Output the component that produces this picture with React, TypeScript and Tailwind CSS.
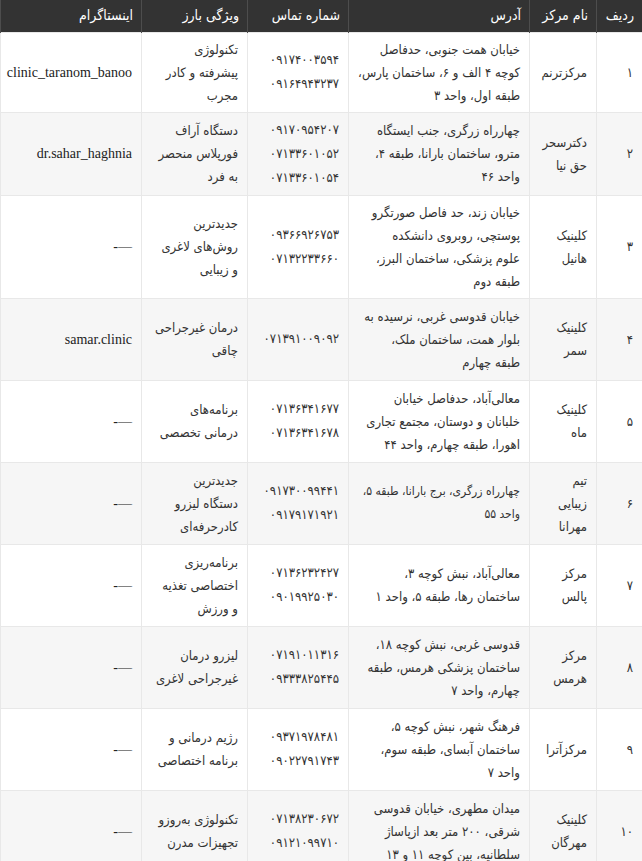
import React from "react";

type Clinic = {
  id: string;
  name: string[];
  address: string[];
  phones: string[];
  feature: string[];
  instagram: string;
  tight?: boolean;
};

const clinics: Clinic[] = [
  {
    id: "۱",
    name: ["مرکزترنم"],
    address: ["خیابان همت جنوبی، حدفاصل", "کوچه ۴ الف و ۶، ساختمان پارس،", "طبقه اول، واحد ۳"],
    phones: ["۰۹۱۷۴۰۰۳۵۹۴", "۰۹۱۶۴۹۴۳۲۳۷"],
    feature: ["تکنولوژی", "پیشرفته و کادر", "مجرب"],
    instagram: "clinic_taranom_banoo",
  },
  {
    id: "۲",
    name: ["دکترسحر", "حق نیا"],
    address: ["چهارراه زرگری، جنب ایستگاه", "مترو، ساختمان بارانا، طبقه ۴،", "واحد ۴۶"],
    phones: ["۰۹۱۷۰۹۵۴۲۰۷", "۰۷۱۳۳۶۰۱۰۵۲", "۰۷۱۳۳۶۰۱۰۵۴"],
    feature: ["دستگاه آراف", "فورپلاس منحصر", "به فرد"],
    instagram: "dr.sahar_haghnia",
  },
  {
    id: "۳",
    name: ["کلینیک", "هانیل"],
    address: ["خیابان زند، حد فاصل صورتگرو", "پوستچی، روبروی دانشکده", "علوم پزشکی، ساختمان البرز،", "طبقه دوم"],
    phones: ["۰۹۳۶۶۹۲۶۷۵۳", "۰۷۱۳۲۲۳۳۶۶۰"],
    feature: ["جدیدترین", "روش‌های لاغری", "و زیبایی"],
    instagram: "",
  },
  {
    id: "۴",
    name: ["کلینیک", "سمر"],
    address: ["خیابان قدوسی غربی، نرسیده به", "بلوار همت، ساختمان ملک،", "طبقه چهارم"],
    phones: ["۰۷۱۳۹۱۰۰۹۰۹۲"],
    feature: ["درمان غیرجراحی", "چاقی"],
    instagram: "samar.clinic",
  },
  {
    id: "۵",
    name: ["کلینیک", "ماه"],
    address: ["معالی‌آباد، حدفاصل خیابان", "خلبانان و دوستان، مجتمع تجاری", "اهورا، طبقه چهارم، واحد ۴۴"],
    phones: ["۰۷۱۳۶۳۴۱۶۷۷", "۰۷۱۳۶۳۴۱۶۷۸"],
    feature: ["برنامه‌های", "درمانی تخصصی"],
    instagram: "",
  },
  {
    id: "۶",
    name: ["تیم", "زیبایی", "مهرانا"],
    address: ["چهارراه زرگری، برج بارانا، طبقه ۵،", "واحد ۵۵"],
    phones: ["۰۹۱۷۳۰۰۹۹۴۴۱", "۰۹۱۷۹۱۷۱۹۲۱"],
    feature: ["جدیدترین", "دستگاه لیزرو", "کادرحرفه‌ای"],
    instagram: "",
    tight: true,
  },
  {
    id: "۷",
    name: ["مرکز", "پالس"],
    address: ["معالی‌آباد، نبش کوچه ۳،", "ساختمان رها، طبقه ۵، واحد ۱"],
    phones: ["۰۷۱۳۶۲۳۲۴۲۷", "۰۹۰۱۹۹۲۵۰۳۰"],
    feature: ["برنامه‌ریزی", "اختصاصی تغذیه", "و ورزش"],
    instagram: "",
  },
  {
    id: "۸",
    name: ["مرکز", "هرمس"],
    address: ["قدوسی غربی، نبش کوچه ۱۸،", "ساختمان پزشکی هرمس، طبقه", "چهارم، واحد ۷"],
    phones: ["۰۷۱۹۱۰۱۱۳۱۶", "۰۹۳۳۳۸۲۵۴۴۵"],
    feature: ["لیزرو درمان", "غیرجراحی لاغری"],
    instagram: "",
  },
  {
    id: "۹",
    name: ["مرکزآترا"],
    address: ["فرهنگ شهر، نبش کوچه ۵،", "ساختمان آبسای، طبقه سوم،", "واحد ۷"],
    phones: ["۰۹۳۷۱۹۷۸۴۸۱", "۰۹۰۲۲۷۹۱۷۴۳"],
    feature: ["رژیم درمانی و", "برنامه اختصاصی"],
    instagram: "",
  },
  {
    id: "۱۰",
    name: ["کلینیک", "مهرگان"],
    address: ["میدان مطهری، خیابان قدوسی", "شرقی، ۲۰۰ متر بعد ازپاساژ", "سلطانیه، بین کوچه ۱۱ و ۱۳"],
    phones: ["۰۷۱۳۸۲۳۰۶۷۲", "۰۹۱۲۱۰۹۹۷۱۰"],
    feature: ["تکنولوژی به‌روزو", "تجهیزات مدرن"],
    instagram: "",
  },
];

const headers = ["ردیف", "نام مرکز", "آدرس", "شماره تماس", "ویژگی بارز", "اینستاگرام"];

function Lines({ lines }: { lines: string[] }) {
  return (
    <>
      {lines.map((l, i) => (
        <div key={i} className="whitespace-nowrap">
          {l}
        </div>
      ))}
    </>
  );
}

const td = "border border-[#e8e8e8] px-[9px] py-[5px] align-middle";

export default function App() {
  return (
    <div className="min-h-screen bg-white">
      <table
        dir="rtl"
        className="w-[642px] table-fixed border-collapse text-right font-['DejaVu_Sans_Condensed','DejaVu_Sans',sans-serif] text-[13px] leading-[23px] text-[#333]"
      >
        <colgroup>
          <col className="w-[46px]" />
          <col className="w-[67px]" />
          <col className="w-[181px]" />
          <col className="w-[101px]" />
          <col className="w-[106px]" />
          <col className="w-[141px]" />
        </colgroup>
        <thead>
          <tr className="h-[32px] bg-[#333333] text-white">
            {headers.map((h) => (
              <th
                key={h}
                className="border-x border-[#4d4d4d] px-[8px] text-right align-middle text-[14px] font-normal whitespace-nowrap"
              >
                {h}
              </th>
            ))}
          </tr>
        </thead>
        <tbody>
          {clinics.map((c, i) => (
            <tr
              key={c.id}
              className={`${i === 0 ? "h-[80px]" : "h-[82px]"} ${i % 2 === 1 ? "bg-[#f6f6f6]" : "bg-white"}`}
            >
              <td className={td}>{c.id}</td>
              <td className={td}>
                <Lines lines={c.name} />
              </td>
              <td className={`${td} ${c.tight ? "pl-[2px] text-[12px]" : ""}`}>
                <Lines lines={c.address} />
              </td>
              <td className={`${td} leading-[24px]`}>
                <Lines lines={c.phones} />
              </td>
              <td className={td}>
                <Lines lines={c.feature} />
              </td>
              <td className={`${td} font-['Liberation_Serif',serif] text-[14px] text-[#222]`}>
                {c.instagram || "—-"}
              </td>
            </tr>
          ))}
        </tbody>
      </table>
    </div>
  );
}
